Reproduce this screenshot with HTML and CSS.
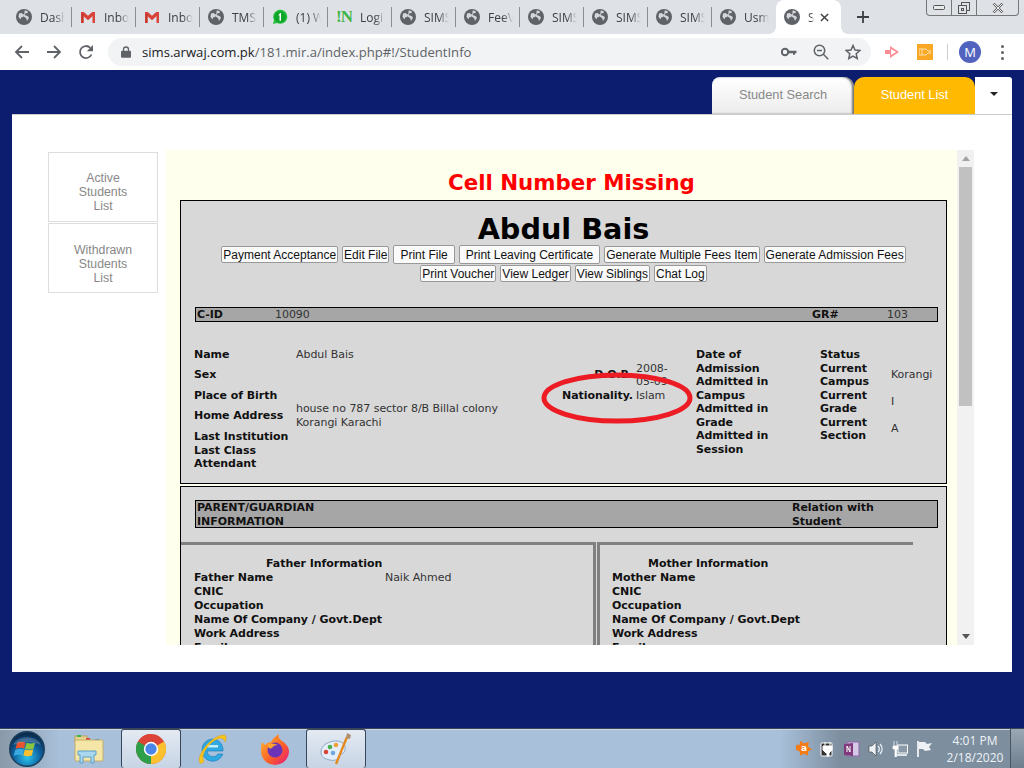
FILE: index.html
```html
<!DOCTYPE html>
<html>
	<head>
		<title>Student Info</title>
		<link rel="stylesheet" href="styles.css">
	</head>
	<body>
		<svg class="defs" width="0" height="0">
			<symbol id="globe" viewBox="0 0 16 16">
				<circle cx="8" cy="8" r="8" fill="#5f6368"/>
				<path d="M3 4.500l3-.5 1.500 2-.5 2-2 .5-.5 2-2-2.500zM8.500 1.500l3 .5 .5 1.500-2.500 1-1 1.500 3 1 1.500 1.500-2 3.500-1-3-2.500-1.500-.5-1.500 1.500-1.500z" fill="#d5d7db"/>
			</symbol>
			<symbol id="gmail" viewBox="0 0 16 16">
				<path d="M1 3h2.500l4.500 4 4.500-4h2.500v11h-2.500v-7l-4.500 4-4.500-4v7h-2.500z" fill="#d9443a"/>
				<path d="M3.500 7l-2.500-4h2.500l4.500 4 4.500-4h2.500l-2.500 4-4.500 4z" fill="#d9443a"/>
				<path d="M3.500 5.500v8.500h-2v-10z" fill="#c0392f"/>
			</symbol>
		</svg>

		<div class="tabstrip">
			<div class="tab"><svg class="favicon"><use href="#globe"/></svg><span class="tab-title">Dash</span></div>
			<div class="tab"><svg class="favicon"><use href="#gmail"/></svg><span class="tab-title">Inbo</span></div>
			<div class="tab"><svg class="favicon"><use href="#gmail"/></svg><span class="tab-title">Inbo</span></div>
			<div class="tab"><svg class="favicon"><use href="#globe"/></svg><span class="tab-title">TMS</span></div>
			<div class="tab">
				<svg class="favicon" viewBox="0 0 16 16"><path d="M1 15l1-4a7 7 0 1 1 3 3z" fill="#25c03c"/><circle cx="8" cy="8" r="5.800" fill="#0da52a"/><path d="M7 5l2-1.200v8h-1.500v-5.500l-1 .5z" fill="#fff"/></svg>
				<span class="tab-title">(1) W</span>
			</div>
			<div class="tab"><span class="favicon in-icon">!N</span><span class="tab-title">Logi</span></div>
			<div class="tab"><svg class="favicon"><use href="#globe"/></svg><span class="tab-title">SIMS</span></div>
			<div class="tab"><svg class="favicon"><use href="#globe"/></svg><span class="tab-title">FeeV</span></div>
			<div class="tab"><svg class="favicon"><use href="#globe"/></svg><span class="tab-title">SIMS</span></div>
			<div class="tab"><svg class="favicon"><use href="#globe"/></svg><span class="tab-title">SIMS</span></div>
			<div class="tab"><svg class="favicon"><use href="#globe"/></svg><span class="tab-title">SIMS</span></div>
			<div class="tab tab-last"><svg class="favicon"><use href="#globe"/></svg><span class="tab-title">Usm</span></div>
			<div class="tab tab-active">
				<svg class="favicon"><use href="#globe"/></svg><span class="tab-title tab-title-short">S</span>
				<svg class="tab-close" viewBox="0 0 10 10"><path d="M1 1l8 8M9 1l-8 8" stroke="#3c4043" stroke-width="1.600"/></svg>
			</div>
			<svg class="new-tab" viewBox="0 0 12 12"><path d="M6 0v12M0 6h12" stroke="#3c4043" stroke-width="1.800"/></svg>
			<div class="win-controls">
				<div class="win-btn win-min"><svg width="12" height="6"><rect x=".5" y=".5" width="11" height="4" rx="1" fill="#e8eaee" stroke="#555"/></svg></div>
				<div class="win-btn win-max"><svg width="12" height="12"><rect x="3.500" y=".5" width="8" height="8" fill="none" stroke="#555"/><rect x=".5" y="3.500" width="8" height="8" fill="#dee1e6" stroke="#555"/><rect x="3.500" y="6.500" width="2" height="2" fill="none" stroke="#555"/></svg></div>
				<div class="win-btn win-close"><svg width="12" height="10"><path d="M1.500 .5l9 9M10.500 .5l-9 9" stroke="#666" stroke-width="2.400"/><path d="M1.500 .5l9 9M10.500 .5l-9 9" stroke="#eee" stroke-width="1"/></svg></div>
			</div>
		</div>

		<div class="toolbar">
			<svg class="nav-icon" viewBox="0 0 16 16"><path d="M15 8H2M8 2L2 8l6 6" fill="none" stroke="#5f6368" stroke-width="1.800"/></svg>
			<svg class="nav-icon" viewBox="0 0 16 16"><path d="M1 8h13M8 2l6 6-6 6" fill="none" stroke="#5f6368" stroke-width="1.800"/></svg>
			<svg class="nav-icon" viewBox="0 0 16 16"><path d="M13.500 10.500A6 6 0 1 1 12.300 3.800" fill="none" stroke="#5f6368" stroke-width="1.800"/><path d="M15 1v6.200H8.800z" fill="#5f6368"/></svg>
			<div class="omnibox">
				<svg class="lock" viewBox="0 0 10 12"><path d="M2.500 5V3.500a2.500 2.500 0 0 1 5 0V5" fill="none" stroke="#5f6368" stroke-width="1.300"/><rect y="4.800" width="10" height="7" rx="1" fill="#5f6368"/></svg>
				<span class="url"><b>sims.arwaj.com.pk</b>/181.mir.a/index.php#!/StudentInfo</span>
				<svg class="omni-icon omni-key" viewBox="0 0 16 16"><circle cx="4" cy="8" r="3.200" fill="none" stroke="#5f6368" stroke-width="2"/><path d="M7 6.800h8.500v2.400h-1.500v1.600h-2v-1.600h-5z" fill="#5f6368"/></svg>
				<svg class="omni-icon" viewBox="0 0 16 16"><circle cx="6.500" cy="6.500" r="5.200" fill="none" stroke="#5f6368" stroke-width="1.500"/><path d="M10.300 10.300l5 5M4 6.500h5" stroke="#5f6368" stroke-width="1.500"/></svg>
				<svg class="omni-icon" viewBox="0 0 16 16"><path d="M8 1.500l2 4.500 4.800.5-3.600 3.200 1 4.800L8 12.100l-4.200 2.400 1-4.800L1.200 6.500 6 6z" fill="none" stroke="#5f6368" stroke-width="1.500"/></svg>
			</div>
			<svg class="ext-icon" viewBox="0 0 16 14"><path d="M0 5h5V1l9 6-9 6V9H0z" fill="#fb8d94"/><path d="M6 4l5 3-5 3z" fill="#fff"/></svg>
			<div class="ext-orange"><svg width="12" height="8" viewBox="0 0 12 8"><path d="M0 1h7l2 2h3v2H9L7 7H0zM3 1v6" fill="none" stroke="#ffe2b0"/></svg></div>
			<div class="tool-sep"></div>
			<div class="avatar">M</div>
			<div class="menu-dots"><i></i><i></i><i></i></div>
		</div>

		<div class="page">
			<div class="top-tabs">
				<div class="top-tab search-tab">Student Search</div>
				<div class="top-tab list-tab">Student List</div>
				<div class="top-tab caret-tab"><span class="caret"></span></div>
			</div>
			<div class="card">
				<div class="sidebar">
					<div class="side-item">Active<br>Students<br>List</div>
					<div class="side-item side-item-2">Withdrawn<br>Students<br>List</div>
				</div>
				<div class="viewer">
					<div class="doc">
						<h2 class="missing">Cell Number Missing</h2>
						<div class="panel panel-student">
							<h1 class="student-name">Abdul Bais</h1>
							<div class="actions">
								<button>Payment Acceptance</button>
								<button>Edit File</button>
								<button class="big-btn">Print File</button>
								<button class="big-btn">Print Leaving Certificate</button>
								<button>Generate Multiple Fees Item</button>
								<button>Generate Admission Fees</button>
							</div>
							<div class="actions actions-2">
								<button>Print Voucher</button>
								<button>View Ledger</button>
								<button>View Siblings</button>
								<button>Chat Log</button>
							</div>
							<div class="bar id-bar">
								<b>C-ID</b><span>10090</span><b>GR#</b><span>103</span>
							</div>
							<div class="info">
								<div class="info-main">
									<b class="row-1">Name</b><span class="row-1">Abdul Bais</span><span></span><span></span>
									<b class="row-2">Sex</b><span></span><b class="right row-2">D.O.B.</b><span class="val-narrow">2008-<br>05-09</span>
									<b>Place of Birth</b><span></span><b class="right">Nationality.</b><span class="val-narrow">Islam</span>
									<b class="row-2">Home Address</b><span class="wide">house no 787 sector 8/B Billal colony<br>Korangi Karachi</span>
									<b class="full">Last Institution</b>
									<b class="full">Last Class<br>Attendant</b>
								</div>
								<div class="info-admit">
									<b>Date of<br>Admission</b>
									<b>Admitted in<br>Campus</b>
									<b>Admitted in<br>Grade</b>
									<b>Admitted in<br>Session</b>
								</div>
								<div class="info-status">
									<b>Status</b><span></span>
									<b>Current<br>Campus</b><span class="mid">Korangi</span>
									<b>Current<br>Grade</b><span class="mid">I</span>
									<b>Current<br>Section</b><span class="mid">A</span>
								</div>
							</div>
							<svg class="oval" width="160" height="58" viewBox="0 0 160 58"><ellipse cx="79" cy="29" rx="73" ry="23" fill="none" stroke="#ed1c24" stroke-width="5"/></svg>
						</div>
						<div class="panel panel-parent">
							<div class="bar parent-bar">
								<b>PARENT/GUARDIAN<br>INFORMATION</b>
								<b class="relation">Relation with Student</b>
							</div>
							<div class="parents">
								<div class="parent-col father">
									<b class="parent-head">Father Information</b>
									<div class="parent-row"><b>Father Name</b><span>Naik Ahmed</span></div>
									<div class="parent-row"><b>CNIC</b></div>
									<div class="parent-row"><b>Occupation</b></div>
									<div class="parent-row"><b>Name Of Company / Govt.Dept</b></div>
									<div class="parent-row"><b>Work Address</b></div>
									<div class="parent-row"><b>Email</b></div>
								</div>
								<div class="parent-col mother">
									<b class="parent-head">Mother Information</b>
									<div class="parent-row"><b>Mother Name</b></div>
									<div class="parent-row"><b>CNIC</b></div>
									<div class="parent-row"><b>Occupation</b></div>
									<div class="parent-row"><b>Name Of Company / Govt.Dept</b></div>
									<div class="parent-row"><b>Work Address</b></div>
									<div class="parent-row"><b>Email</b></div>
								</div>
							</div>
						</div>
					</div>
					<div class="scrollbar">
						<span class="arrow-up"></span>
						<div class="thumb"></div>
						<span class="arrow-down"></span>
					</div>
				</div>
			</div>
		</div>

		<div class="taskbar">
			<div class="start-area">
				<svg width="38" height="38" viewBox="0 0 38 38">
					<defs>
						<radialGradient id="orb" cx=".5" cy=".75" r=".7"><stop offset="0" stop-color="#2bc4ee"/><stop offset=".6" stop-color="#0e5f9e"/><stop offset="1" stop-color="#0b2c4e"/></radialGradient>
					</defs>
					<circle cx="18" cy="19" r="18" fill="#1c3f5c"/>
					<circle cx="18" cy="19" r="16.500" fill="url(#orb)"/>
					<path d="M8 13q4-2 8.500-.5l-1.500 6q-4-1.500-8.500 .5z" fill="#e8552c"/>
					<path d="M17.500 12.800q4 1.500 8.500 0l-1.500 6q-4 1.500-8.500 0z" fill="#8cc63f"/>
					<path d="M6.200 20q4-2 8.500-.5l-1.500 6q-4-1.500-8.500 .5z" fill="#39a9e0"/>
					<path d="M15.800 19.500q4 1.500 8.500 0l-1.500 6q-4 1.500-8.500 0z" fill="#fbc02d"/>
					<path d="M4 15a15 12 0 0 1 28 0q-14-6-28 0z" fill="#fff" opacity=".2"/>
				</svg>
			</div>
			<div class="task-item">
				<svg width="32" height="30" viewBox="0 0 32 30">
					<rect x="2" y="2" width="12" height="6" fill="#e6d48e" stroke="#b7a460"/>
					<rect x="4" y="1" width="4" height="2" fill="#3cb34a"/><rect x="13" y="4" width="4" height="2" fill="#d9443a"/><rect x="22" y="5" width="4" height="2" fill="#3b8fd9"/>
					<rect x="2" y="6" width="28" height="21" rx="1" fill="#f5e6a8" stroke="#c3ae68"/>
					<path d="M5 17h18v4h-2v8h-3v-6h-8v6h-3v-8h-2z" fill="#a9d7ee" stroke="#5c9fc6"/>
				</svg>
			</div>
			<div class="task-item task-open">
				<svg width="30" height="30" viewBox="0 0 30 30">
					<circle cx="15" cy="15" r="15" fill="#db4437"/>
					<path d="M15 15L28 7.500A15 15 0 0 1 15 30z" fill="#fbc02d"/>
					<path d="M15 15L15 30A15 15 0 0 1 2 7.500z" fill="#2e9e48"/>
					<path d="M2 7.500A15 15 0 0 1 15 0v8z" fill="#db4437"/>
					<circle cx="15" cy="15" r="7.200" fill="#fff"/>
					<circle cx="15" cy="15" r="5.700" fill="#4a86e8"/>
				</svg>
			</div>
			<div class="task-item">
				<svg width="32" height="32" viewBox="0 0 32 32">
					<path d="M5 17a10.500 10.500 0 0 1 21-1v2H10a6 6 0 0 0 11 3h5a10.800 10.800 0 0 1-21-4z" fill="#2fa9e3" stroke="#1878b5" stroke-width=".6"/>
					<rect x="10" y="12" width="11" height="2.500" fill="#c7ecfa"/>
					<path d="M3 30C-1 26 9 8 22 3c6-2 9-1 6 6-1-3-3-5-8-3C10 11 3 24 7 28c-1 2-3 3-4 2z" fill="#f8c51c" stroke="#d49c10" stroke-width=".5"/>
				</svg>
			</div>
			<div class="task-item">
				<svg width="32" height="32" viewBox="0 0 32 32">
					<defs>
						<linearGradient id="fox" x1="0" y1="0" x2="1" y2="1"><stop offset="0" stop-color="#ffbc2c"/><stop offset=".6" stop-color="#fb5a2a"/><stop offset="1" stop-color="#e31587"/></linearGradient>
					</defs>
					<path d="M3 9l3 3c2-2 4-3 6-3C14 5 17 3 20 1c-1 3 0 5 3 7 3 2 7 6 7 10a14 14 0 0 1-28 0c0-3 0-6 1-9z" fill="url(#fox)"/>
					<circle cx="16" cy="17" r="7.500" fill="#6b33b8"/>
					<path d="M8 12c3-2 7-2 11 0-3 0-5 1-6 3-2 1-4 0-5-3z" fill="#ffa52c"/>
				</svg>
			</div>
			<div class="task-item task-open task-last">
				<svg width="34" height="34" viewBox="0 0 34 34">
					<path d="M2 20c0-7 8-11 15-11s10 5 9 9c-1 5-5 3-6 6-1 4-5 5-9 4-5-1-9-3-9-8z" fill="#e4eef8" stroke="#8ea6c4"/>
					<circle cx="7" cy="20" r="2.300" fill="#d9443a"/><circle cx="11" cy="15" r="2.300" fill="#4caf50"/><circle cx="17" cy="13" r="2.300" fill="#f0a030"/><circle cx="14" cy="21" r="2.300" fill="#6fa8dc"/>
					<path d="M28 5L17 32" stroke="#e48a1e" stroke-width="2.400"/>
					<path d="M27 6l1-5 4 2 -1 4z" fill="#b09070"/>
				</svg>
			</div>
			<div class="tray">
				<div class="tray-icon avast">a</div>
				<svg class="tray-icon" viewBox="0 0 16 16"><rect x="1" y="2" width="11" height="13" rx="1" fill="#333" stroke="#fff"/><path d="M5 1v4M10 1v4M3 5h9v4l-3 3H6L3 9zM7 12h2v3H7z" fill="#fff" stroke="#fff"/></svg>
				<svg class="tray-icon" viewBox="0 0 16 16"><rect x="3" y="1" width="12" height="14" fill="#d8c8e8" stroke="#8d6aa8"/><path d="M0 3l9-1v13l-9-1z" fill="#80397b"/><path d="M3 11V5l3 6V5" stroke="#fff" fill="none"/></svg>
				<svg class="tray-icon" viewBox="0 0 16 16"><path d="M1 5h3l4-4v14l-4-4H1z" fill="#eef2f6" stroke="#444" stroke-width=".6"/><path d="M10 5a4 4 0 0 1 0 6M12 3a7 7 0 0 1 0 10" fill="none" stroke="#eef2f6" stroke-width="1.200"/></svg>
				<svg class="tray-icon" viewBox="0 0 16 16"><path d="M2 0v6M5 0v6M1 5h5v3H4.500v8h-1.500V8H1z" fill="#fff" stroke="#fff" stroke-width=".7"/><rect x="6" y="4" width="9.500" height="8" fill="#8a9aa8" stroke="#fff"/><path d="M5 14h10" stroke="#fff" stroke-width="1.500"/></svg>
				<svg class="tray-icon" viewBox="0 0 16 16"><path d="M2 0v16" stroke="#fff" stroke-width="1.600"/><path d="M3 1h6l2 2 5-1-3 4 2 3-6 1-2-2H3z" fill="#eef2f6"/></svg>
				<div class="clock">4:01 PM<br>2/18/2020</div>
				<div class="show-desktop"></div>
			</div>
		</div>
	</body>
</html>
```

FILE: styles.css
```css
* {
	box-sizing: border-box;
}

body {
	margin: 0;
	width: 1024px;
	height: 768px;
	overflow: hidden;
	display: flex;
	flex-direction: column;
	font-family: "DejaVu Sans", sans-serif;
}

.defs {
	display: none;
}

/* browser chrome */
.tabstrip {
	height: 34px;
	background-color: #dee1e6;
	display: flex;
	padding-left: 8px;
	flex-shrink: 0;
}

.tab {
	position: relative;
	width: 64px;
	height: 34px;
	display: flex;
	align-items: center;
	padding-left: 8px;
	font-family: "Open Sans", sans-serif;
	font-size: 12px;
	color: #3c4043;
}

.tab::after {
	content: "";
	position: absolute;
	right: 0;
	top: 7px;
	height: 20px;
	width: 1px;
	background-color: #8a8d91;
}

.tab-last::after {
	display: none;
}

.tab-active {
	width: 65px;
	background-color: white;
	border-radius: 8px 8px 0 0;
}

.tab-active::before,
.tab-active::after {
	content: "";
	position: absolute;
	top: auto;
	bottom: 0;
	width: 8px;
	height: 8px;
}

.tab-active::before {
	left: -8px;
	background: radial-gradient(circle at 0 0, transparent 8px, white 8px);
}

.tab-active::after {
	right: -8px;
	background: radial-gradient(circle at 100% 0, transparent 8px, white 8px);
}

.favicon {
	width: 16px;
	height: 16px;
	flex-shrink: 0;
}

.in-icon {
	font-family: "Liberation Serif", serif;
	font-weight: bold;
	font-size: 17px;
	line-height: 16px;
	color: #3fb54a;
	letter-spacing: -1px;
	overflow: hidden;
}

.tab-title {
	margin-left: 8px;
	width: 25px;
	overflow: hidden;
	white-space: nowrap;
	-webkit-mask-image: linear-gradient(to right, black 60%, transparent);
	mask-image: linear-gradient(to right, black 60%, transparent);
}

.tab-title-short {
	width: 6px;
	color: #555;
}

.tab-close {
	width: 9px;
	height: 9px;
	margin-left: 6px;
}

.new-tab {
	width: 12px;
	height: 12px;
	margin: 11px 0 0 16px;
}

.win-controls {
	display: flex;
	margin-left: auto;
	margin-right: 5px;
	height: 16px;
	border: 1px solid #777;
	border-top: 0;
	border-radius: 0 0 4px 4px;
}

.win-btn {
	display: flex;
	align-items: center;
	justify-content: center;
	border-right: 1px solid #777;
}

.win-min {
	width: 25px;
}

.win-max {
	width: 25px;
}

.win-close {
	width: 41px;
	border-right: 0;
}

.toolbar {
	height: 36px;
	background-color: white;
	display: flex;
	align-items: center;
	padding-left: 14px;
	flex-shrink: 0;
}

.nav-icon {
	width: 16px;
	height: 16px;
	margin-right: 16px;
}

.omnibox {
	margin-left: -2px;
	width: 763px;
	height: 28px;
	background-color: #f1f3f4;
	border-radius: 14px;
	display: flex;
	align-items: center;
	padding-left: 13px;
}

.lock {
	width: 10px;
	height: 12px;
}

.url {
	margin-left: 11px;
	font-family: "Open Sans", sans-serif;
	font-size: 13.100px;
	color: #5f6368;
	white-space: nowrap;
}

.url b {
	font-weight: normal;
	color: #202124;
}

.omni-icon {
	width: 16px;
	height: 16px;
	margin-left: 16px;
}

.omni-key {
	margin-left: auto;
}

.omnibox .omni-icon:last-child {
	margin-right: 10px;
}

.ext-icon {
	width: 16px;
	height: 14px;
	margin-left: 14px;
}

.ext-orange {
	width: 16px;
	height: 16px;
	margin-left: 16px;
	background-color: #f9a825;
	display: flex;
	align-items: center;
	justify-content: center;
}

.tool-sep {
	width: 1px;
	height: 16px;
	background-color: #ccc;
	margin-left: 14px;
}

.avatar {
	width: 22px;
	height: 22px;
	margin-left: 11px;
	border-radius: 50%;
	background-color: #5162bf;
	color: white;
	font-family: "Open Sans", sans-serif;
	font-size: 13px;
	line-height: 22px;
	text-align: center;
}

.menu-dots {
	margin-left: 20px;
	display: flex;
	flex-direction: column;
	gap: 3px;
}

.menu-dots i {
	display: block;
	width: 3px;
	height: 3px;
	border-radius: 50%;
	background-color: #5f6368;
}

/* page */
.page {
	flex: 1;
	min-height: 0;
	background-color: #0c1d6f;
	padding: 7px 12px 56px;
	display: flex;
	flex-direction: column;
}

.top-tabs {
	display: flex;
	justify-content: flex-end;
	height: 37px;
	flex-shrink: 0;
}

.top-tab {
	font-family: "Liberation Sans", sans-serif;
	font-size: 12.800px;
	padding-bottom: 3px;
	display: flex;
	align-items: center;
	justify-content: center;
}

.search-tab {
	width: 142px;
	padding-bottom: 2px;
	color: #888;
	background: linear-gradient(to bottom, white, #ececec);
	border-radius: 8px 10px 0 0;
	box-shadow: inset -2px 0 2px #777;
}

.list-tab {
	width: 121px;
	color: white;
	background-color: #ffb900;
	border-radius: 10px 10px 0 0;
}

.caret-tab {
	width: 37px;
	background-color: white;
	border-radius: 0 3px 0 0;
}

.caret {
	border-left: 4px solid transparent;
	border-right: 4px solid transparent;
	border-top: 4px solid #222;
}

.card {
	flex: 1;
	min-height: 0;
	background-color: white;
	border-top: 1px solid #ccc;
	padding: 35px 38px 27px 36px;
	display: flex;
	gap: 8px;
}

.sidebar {
	width: 110px;
	padding-top: 2px;
	flex-shrink: 0;
}

.side-item {
	height: 70px;
	border: 1px solid #ddd;
	padding-top: 18px;
	color: #888;
	font-family: "Liberation Sans", sans-serif;
	font-size: 12.300px;
	line-height: 14px;
	text-align: center;
}

.side-item-2 {
	margin-top: 1px;
	padding-top: 19px;
}

.viewer {
	flex: 1;
	display: flex;
	background-color: #ffffee;
	overflow: hidden;
}

.doc {
	width: 791px;
	overflow: hidden;
	font-size: 11px;
	line-height: 13.500px;
	letter-spacing: -0.05px;
	color: #333;
}

.doc b {
	color: #111;
	font-weight: bold;
}

.missing {
	margin: 0 0 0 20px;
	height: 50px;
	padding-top: 20px;
	font-size: 21.330px;
	line-height: 26px;
	letter-spacing: 0;
	text-align: center;
	color: red;
}

.panel {
	position: relative;
	width: 767px;
	margin-left: 14px;
	border: 1px solid black;
	background-color: #d8d8d8;
}

.panel-student {
	height: 284px;
	margin-bottom: 2px;
}

.student-name {
	margin: 12px 0 0;
	font-size: 28.700px;
	line-height: 32px;
	letter-spacing: 0;
	text-align: center;
	color: black;
}

.actions {
	display: flex;
	justify-content: center;
	align-items: center;
	gap: 4px;
	height: 19px;
}

.actions button {
	height: 17px;
	padding: 0 1px;
	background-color: #fafafa;
	border: 1px solid #999;
	border-radius: 2px;
	font-family: "Liberation Sans", sans-serif;
	font-size: 12px;
	line-height: 14px;
	color: #111;
}

.actions .big-btn {
	height: 19px;
	padding: 0 6px;
}

.bar {
	margin: 0 8px 0 14px;
	width: 743px;
	background-color: #a6a6a6;
	border: 1px solid black;
	padding-left: 1px;
	display: grid;
}

.id-bar {
	margin-top: 24px;
	height: 15px;
	grid-template-columns: 78px 537px 75px 1fr;
	line-height: 14px;
}

.info {
	display: flex;
	margin: 26px 0 0 13px;
}

.info-main {
	width: 502px;
	display: grid;
	grid-template-columns: 102px 214px 123px 63px;
	grid-template-rows: 13.500px 27px 13.500px 27px 14.500px 27px;
}

.info-main .row-2,
.info-main .wide,
.info-main .val-narrow {
	align-self: center;
}

.right {
	text-align: right;
}

.val-narrow {
	padding-left: 3px;
}

.wide {
	grid-column: 2 / 5;
}

.full {
	grid-column: 1 / 5;
	align-self: end;
}

.info-admit {
	width: 124px;
	display: flex;
	flex-direction: column;
}

.info-status {
	display: grid;
	grid-template-columns: 71px 50px;
	grid-template-rows: 13.500px 27px 27px 27px;
}

.mid {
	align-self: center;
}

.oval {
	position: absolute;
	left: 357px;
	top: 168px;
}

.panel-parent {
	height: 300px;
	padding-top: 13px;
}

.parent-bar {
	height: 28px;
	grid-template-columns: 595px 110px;
}

.relation {
	display: block;
}

.parents {
	display: flex;
	margin-top: 14px;
}

.parent-col {
	border-top: 3px solid #808080;
	padding-top: 12px;
	line-height: 14px;
}

.father {
	width: 415px;
	border-right: 3px solid #808080;
	padding-left: 13px;
}

.mother {
	width: 316px;
	margin-left: 1px;
	border-left: 3px solid #808080;
	padding-left: 12px;
}

.parent-head {
	display: block;
	padding-left: 72px;
}

.mother .parent-head {
	padding-left: 36px;
}

.parent-row {
	display: flex;
}

.parent-row b {
	width: 191px;
	flex-shrink: 0;
}

.scrollbar {
	width: 17px;
	background-color: #f1f1f1;
	display: flex;
	flex-direction: column;
	align-items: center;
}

.thumb {
	width: 13px;
	height: 239px;
	margin-top: 6px;
	background-color: #c1c1c1;
}

.arrow-up {
	margin-top: 6px;
	border-left: 4px solid transparent;
	border-right: 4px solid transparent;
	border-bottom: 5px solid #a3a3a3;
}

.arrow-down {
	margin-top: auto;
	margin-bottom: 6px;
	border-left: 4px solid transparent;
	border-right: 4px solid transparent;
	border-top: 5px solid #555;
}

/* windows taskbar */
.taskbar {
	height: 40px;
	flex-shrink: 0;
	display: flex;
	align-items: center;
	background: linear-gradient(to right, #8a99a8, #a8c0da 60px, #a8c0da 780px, #7d8e9f 840px, #7d8e9f);
	border-top: 1px solid #3a4658;
	box-shadow: inset 0 1px 0 #c9d6e4;
}

.start-area {
	width: 58px;
	padding-left: 9px;
	display: flex;
	align-items: center;
}

.task-item {
	width: 62px;
	height: 39px;
	display: flex;
	align-items: center;
	justify-content: center;
}

.task-open {
	width: 60px;
	margin: 0 1px;
	background: linear-gradient(to bottom, #e3eaf3, #c7d4e4);
	border: 1px solid #39465a;
	border-bottom: 0;
	border-radius: 3px;
}

.task-last {
	margin: 0;
}

.tray {
	margin-left: auto;
	display: flex;
	align-items: center;
	height: 39px;
}

.tray-icon {
	width: 16px;
	height: 16px;
	margin-right: 8px;
}

.avast {
	clip-path: polygon(0 30%, 25% 25%, 25% 0, 50% 18%, 80% 8%, 75% 38%, 100% 55%, 75% 68%, 75% 95%, 50% 82%, 25% 95%, 25% 70%, 0 58%);
	background-color: #f57c14;
	color: white;
	font-family: "DejaVu Sans", sans-serif;
	font-size: 9px;
	font-weight: bold;
	line-height: 15px;
	text-align: center;
}

.clock {
	width: 70px;
	text-align: center;
	font-family: "Open Sans", sans-serif;
	font-size: 12px;
	line-height: 17px;
	color: #eef2f6;
}

.show-desktop {
	width: 14px;
	height: 39px;
	border-left: 1px solid #4a5560;
	background: linear-gradient(to bottom, #9aa8b6, #6f7e8c);
}
```
